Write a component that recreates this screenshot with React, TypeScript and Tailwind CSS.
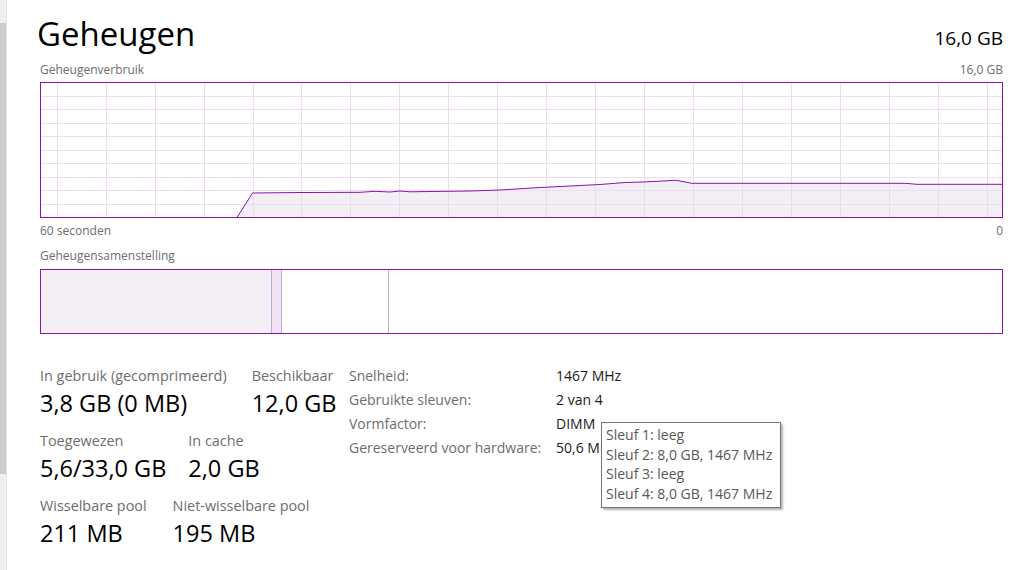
import React from 'react';

const linePoints: [number, number][] = [
  [237, 217.5], [252.5, 193], [300, 192.5], [360, 192.3], [375, 191.3], [390, 192],
  [400, 191], [410, 191.8], [430, 191.5], [470, 191], [500, 190], [540, 187.5],
  [580, 185.5], [600, 184.5], [625, 182.5], [643, 182], [676, 180.3], [692, 183.3],
  [905, 183.3], [917, 184.3], [1002, 184.3],
];

const UsageChart: React.FC = () => {
  const pts = linePoints.map(([x, y]) => [x - 40, y - 82] as [number, number]);
  const line = pts.map(([x, y], i) => `${i ? 'L' : 'M'}${x} ${y}`).join(' ');
  const fill = `${line} L962 135 L197 135 Z`;
  const vLines = Array.from({ length: 20 }, (_, k) => Math.round(16.7 + k * 48.95) + 0.5);
  const hLines = Array.from({ length: 9 }, (_, k) => Math.round(13.5 * (k + 1)) + 0.5);

  return (
    <svg width={963} height={136} viewBox="0 0 963 136" className="block">
      <path d={fill} fill="#f3f0f5" />
      {vLines.map((x) => (
        <line key={x} x1={x} y1={0} x2={x} y2={136} stroke="#ecdcf0" strokeWidth={1} />
      ))}
      {hLines.map((y) => (
        <line key={y} x1={0} y1={y} x2={963} y2={y} stroke="#ecdcf0" strokeWidth={1} />
      ))}
      <path d={line} fill="none" stroke="#8b12ae" strokeWidth={1} />
      <rect x={0.5} y={0.5} width={962} height={135} fill="none" stroke="#8b12ae" strokeWidth={1} />
    </svg>
  );
};

const CompositionBar: React.FC = () => (
  <div className="flex h-[65px] w-[963px] border border-[#8b12ae]">
    <div className="w-[230px] bg-[#f3f0f5]" />
    <div className="w-[11px] bg-[#efe4f3] border-x border-[#c9a8d6]" />
    <div className="w-[107px] border-r border-[#c9a8d6]" />
    <div className="flex-1" />
  </div>
);

const Stat: React.FC<{ label: string; value: string }> = ({ label, value }) => (
  <div className="flex flex-col">
    <span className="text-[14.4px] leading-[20px] text-[#6d6d6d]">{label}</span>
    <span className="mt-[1px] text-[23.5px] leading-[32px] text-black">{value}</span>
  </div>
);

const details: [string, string][] = [
  ['Snelheid:', '1467 MHz'],
  ['Gebruikte sleuven:', '2 van 4'],
  ['Vormfactor:', 'DIMM'],
  ['Gereserveerd voor hardware:', '50,6 MB'],
];

const slots = ['Sleuf 1: leeg', 'Sleuf 2: 8,0 GB, 1467 MHz', 'Sleuf 3: leeg', 'Sleuf 4: 8,0 GB, 1467 MHz'];

export default function App() {
  return (
    <div className="relative flex h-[570px] w-[1022px] overflow-hidden bg-white font-['Open_Sans',sans-serif]">
      {/* scrollbar */}
      <div className="flex h-full w-[7px] flex-col border-r border-[#e3e3e3] bg-[#f0f0f0]">
        <div className="h-[23px]" />
        <div className="h-[451px] bg-[#cdcdcd]" />
      </div>

      <div className="flex-1 pl-[33px] pr-[19px]">
        <div className="flex justify-between">
          <h1 className="-ml-[3px] mt-[14px] text-[33px] leading-[40px] text-black">Geheugen</h1>
          <span className="mt-[26px] text-[19px] leading-[24px] text-black">16,0 GB</span>
        </div>

        <div className="mt-[8px] flex h-[20px] justify-between text-[12px] leading-[16px] text-[#6d6d6d]">
          <span>Geheugenverbruik</span>
          <span>16,0 GB</span>
        </div>

        <UsageChart />

        <div className="mt-[5px] flex h-[16px] justify-between text-[12px] leading-[16px] text-[#6d6d6d]">
          <span>60 seconden</span>
          <span>0</span>
        </div>

        <div className="mt-[9px] h-[16px] text-[12px] leading-[16px] text-[#6d6d6d]">Geheugensamenstelling</div>

        <div className="mt-[5px]">
          <CompositionBar />
        </div>

        <div className="mt-[30px] flex">
          <div className="flex w-[309px] flex-col gap-[12px] pt-[2px]">
            <div className="flex gap-[25px]">
              <Stat label="In gebruik (gecomprimeerd)" value="3,8 GB (0 MB)" />
              <Stat label="Beschikbaar" value="12,0 GB" />
            </div>
            <div className="flex gap-[22px]">
              <Stat label="Toegewezen" value="5,6/33,0 GB" />
              <Stat label="In cache" value="2,0 GB" />
            </div>
            <div className="flex gap-[26px]">
              <Stat label="Wisselbare pool" value="211 MB" />
              <Stat label="Niet-wisselbare pool" value="195 MB" />
            </div>
          </div>

          <div className="flex flex-col text-[14px] leading-[24px]">
            {details.map(([k, v]) => (
              <div key={k} className="flex">
                <span className="w-[207px] text-[#6d6d6d]">{k}</span>
                <span className="text-[#1a1a1a]">{v}</span>
              </div>
            ))}
          </div>
        </div>
      </div>

      {/* tooltip */}
      <div className="absolute left-[601px] top-[422px] w-[180px] border border-[#767676] bg-white pb-[3px] pl-[4px] pt-[2px] text-[14px] leading-[19.7px] text-[#575757] shadow-[2px_2px_2px_rgba(0,0,0,0.3)]">
        {slots.map((s) => (
          <div key={s}>{s}</div>
        ))}
      </div>
    </div>
  );
}
